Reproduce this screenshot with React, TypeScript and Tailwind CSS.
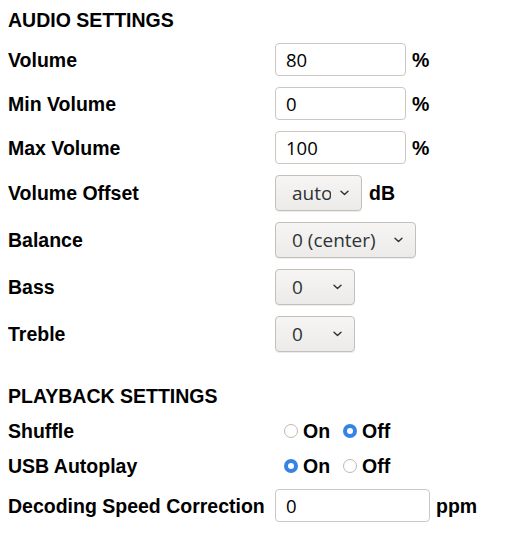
import React, { useState } from 'react';

const labelCls = "font-bold text-[19.5px] leading-[24px] text-black";
const ctrlFont = { fontFamily: '"Open Sans", "Noto Sans", sans-serif' };

function Chevron() {
  return (
    <svg width="9" height="6" viewBox="0 0 9 6" className="pointer-events-none absolute right-[13px] top-1/2 -translate-y-1/2">
      <path d="M1 1.2 L4.5 4.6 L8 1.2" fill="none" stroke="#2e3436" strokeWidth="1.4" strokeLinecap="round" strokeLinejoin="round" />
    </svg>
  );
}

function TextInput({ value, width }: { value: string; width: string }) {
  const [v, setV] = useState(value);
  return (
    <input
      type="text"
      value={v}
      onChange={(e) => setV(e.target.value)}
      style={ctrlFont}
      className={`${width} h-[33px] rounded-[4px] border border-[#cdc7c2] bg-white px-[10px] text-[18.5px] text-black outline-none`}
    />
  );
}

function Select({ value, options, width }: { value: string; options: string[]; width: string }) {
  const [v, setV] = useState(value);
  return (
    <div className={`relative ${width} h-[36px]`}>
      <select
        value={v}
        onChange={(e) => setV(e.target.value)}
        style={ctrlFont}
        className="h-full w-full appearance-none rounded-[4px] border border-[#c3bfba] bg-gradient-to-b from-[#f6f5f4] to-[#edebe9] pl-[16px] pr-[30px] text-[19px] text-[#2e3436] shadow-[0_1px_0_rgba(0,0,0,0.07)] outline-none"
      >
        {options.map((o) => (
          <option key={o}>{o}</option>
        ))}
      </select>
      <Chevron />
    </div>
  );
}

function Radio({ checked, label, onClick }: { checked: boolean; label: string; onClick: () => void }) {
  return (
    <label className="flex cursor-pointer items-center" onClick={onClick}>
      {checked ? (
        <span className="flex h-[14px] w-[14px] items-center justify-center rounded-full bg-[#3584e4]">
          <span className="h-[6px] w-[6px] rounded-full bg-white" />
        </span>
      ) : (
        <span className="h-[14px] w-[14px] rounded-full border border-[#bfb9b3] bg-white" />
      )}
      <span className={`${labelCls} ml-[5px]`}>{label}</span>
    </label>
  );
}

function RadioPair({ initial }: { initial: 'on' | 'off' }) {
  const [val, setVal] = useState(initial);
  return (
    <div className="ml-[9px] flex items-center gap-[13px]">
      <Radio checked={val === 'on'} label="On" onClick={() => setVal('on')} />
      <Radio checked={val === 'off'} label="Off" onClick={() => setVal('off')} />
    </div>
  );
}

function Row({ label, children }: { label: string; children: React.ReactNode }) {
  return (
    <div className="flex items-center">
      <div className={`${labelCls} w-[267px] shrink-0`}>{label}</div>
      <div className="flex items-center gap-[6px]">{children}</div>
    </div>
  );
}

const range = (a: number, b: number) => Array.from({ length: b - a + 1 }, (_, i) => String(a + i));

export default function App() {
  return (
    <div className="min-h-[540px] bg-white px-2 pt-2 text-black" style={{ fontFamily: '"Liberation Sans", Arial, sans-serif' }}>
      <div className="flex flex-col gap-[11px]">
        <h2 className={labelCls}>AUDIO SETTINGS</h2>
        <Row label="Volume">
          <TextInput value="80" width="w-[131px]" />
          <span className={labelCls}>%</span>
        </Row>
        <Row label="Min Volume">
          <TextInput value="0" width="w-[131px]" />
          <span className={labelCls}>%</span>
        </Row>
        <Row label="Max Volume">
          <TextInput value="100" width="w-[131px]" />
          <span className={labelCls}>%</span>
        </Row>
        <Row label="Volume Offset">
          <Select value="auto" options={['auto', '-6', '-3', '0', '3', '6']} width="w-[87px]" />
          <span className={`${labelCls} ml-[1px]`}>dB</span>
        </Row>
        <Row label="Balance">
          <Select value="0 (center)" options={['-2 (left)', '-1', '0 (center)', '1', '2 (right)']} width="w-[141px]" />
        </Row>
        <Row label="Bass">
          <Select value="0" options={range(-10, 10)} width="w-[80px]" />
        </Row>
        <Row label="Treble">
          <Select value="0" options={range(-10, 10)} width="w-[80px]" />
        </Row>
      </div>

      <div className="mt-[32px] flex flex-col gap-[11px]">
        <h2 className={labelCls}>PLAYBACK SETTINGS</h2>
        <Row label="Shuffle">
          <RadioPair initial="off" />
        </Row>
        <Row label="USB Autoplay">
          <RadioPair initial="on" />
        </Row>
        <Row label="Decoding Speed Correction">
          <TextInput value="0" width="w-[155px]" />
          <span className={labelCls}>ppm</span>
        </Row>
      </div>
    </div>
  );
}
